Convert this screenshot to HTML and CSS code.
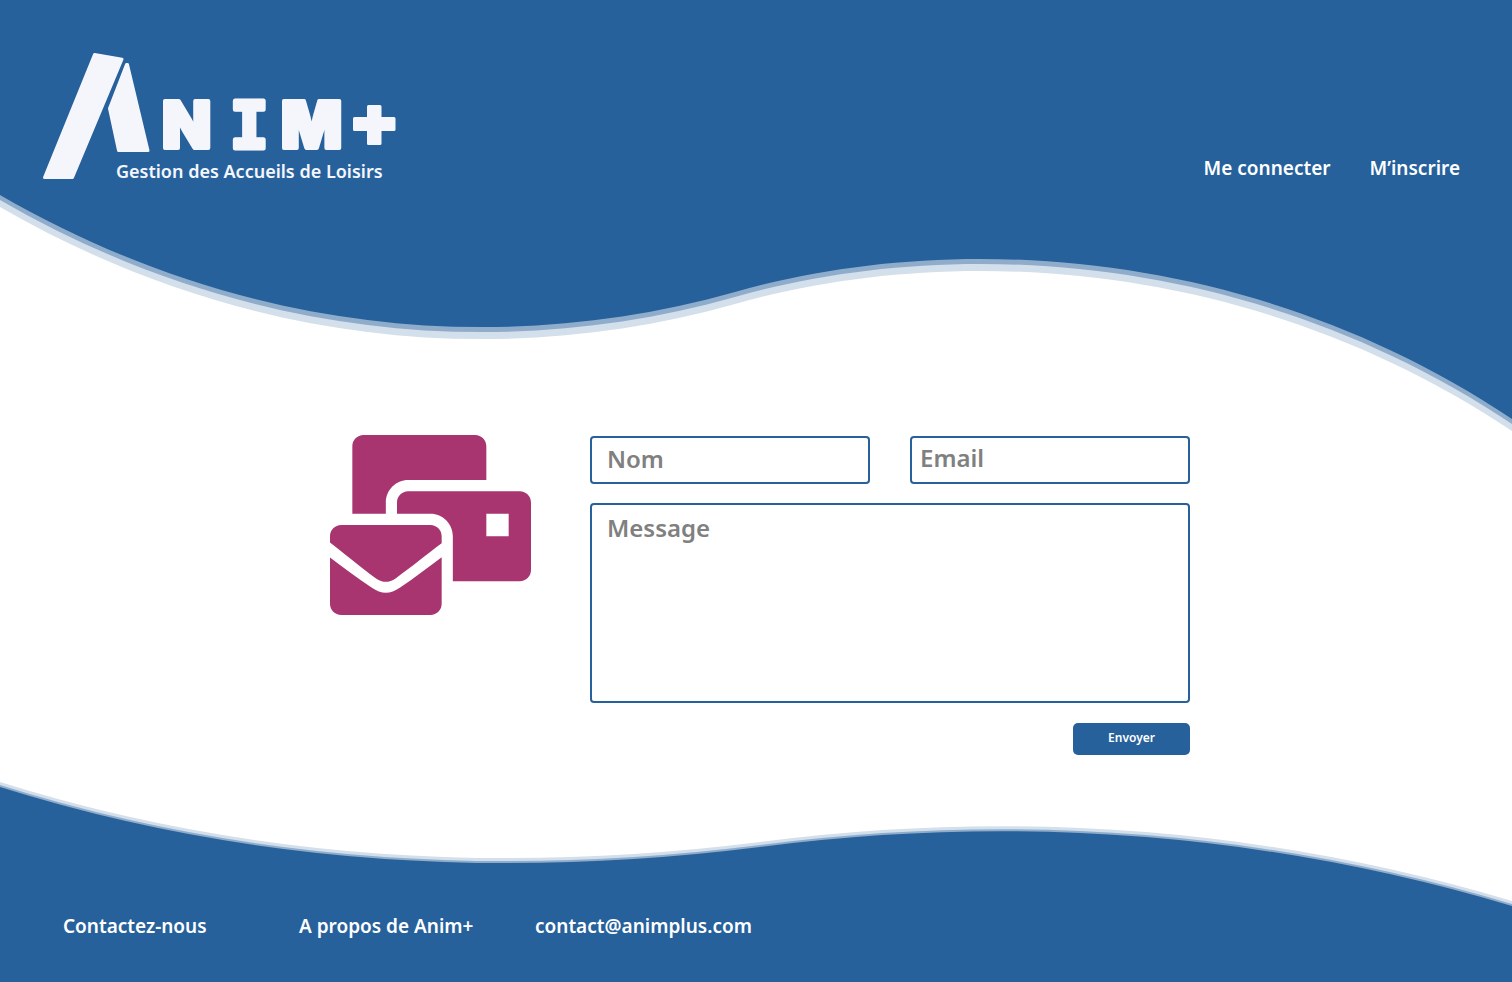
FILE: index.html
```html
<!DOCTYPE html>
<html lang="fr">
<head>
<meta charset="utf-8">
<meta name="viewport" content="width=device-width, initial-scale=1">
<title>Anim+ – Contact</title>
<link rel="stylesheet" href="styles.css">
</head>
<body>
<header class="header">
  <svg class="wave" viewBox="0 0 1512 435" preserveAspectRatio="none" aria-hidden="true">
    <path class="wave-pale" d="M0 0V207C230 340 490 373 735 304C960 240 1260 262 1512 431V0z"/>
    <path class="wave-soft" d="M0 0V200C230 333 490 366 735 297C960 233 1260 255 1512 424V0z"/>
    <path class="wave-deep" d="M0 0V195C230 328 490 361 735 292C960 228 1260 250 1512 419V0z"/>
  </svg>
  <a class="logo" href="#">
    <svg class="logo-art" viewBox="0 0 360 132" role="img" aria-label="Anim+ Gestion des Accueils de Loisirs">
      <g class="logo-mark">
        <path d="M54.500 4.500L82 9.200L32.500 127.500L4.500 127.500z"/>
        <path d="M86.500 14.500L87.500 14.500L108 100.500L78.500 100.500L69.500 58.500z"/>
        <path d="M328.500 56.500h11.500v12h14v11h-14v14h-11.500v-14h-14v-11h14z"/>
      </g>
      <text class="logo-word" y="98"><tspan x="122">N</tspan><tspan class="logo-slab" x="190">I</tspan><tspan x="241">M</tspan></text>
      <text class="logo-tagline" x="76" y="128">Gestion des Accueils de Loisirs</text>
    </svg>
  </a>
  <nav class="nav">
    <a href="#">Me connecter</a>
    <a href="#">M’inscrire</a>
  </nav>
</header>
<main class="contact">
  <svg class="contact-icon" viewBox="0 0 576 512" preserveAspectRatio="none" aria-hidden="true">
    <path d="M96 0h320c17.700 0 32 14.300 32 32v96H224c-35.300 0-64 28.700-64 64v32H64V32C64 14.300 78.300 0 96 0z"/>
    <path fill-rule="evenodd" d="M224 160h320c17.700 0 32 14.300 32 32v192c0 17.700-14.300 32-32 32H352V288c0-35.300-28.700-64-64-64h-96v-32c0-17.700 14.300-32 32-32zM448 224v64h64v-64z"/>
    <path d="M32 256h256c17.700 0 32 14.300 32 32v20C282 336 235 374 188 408c-19 13-37 13-56 0C85 374 38 334 0 305.500V288c0-17.700 14.300-32 32-32z"/>
    <path d="M0 348.500C38 377 76 406 119 434c29 20 53 20 82 0c43-28 81-58 119-86V480c0 17.700-14.300 32-32 32H32c-17.700 0-32-14.300-32-32z"/>
  </svg>
  <form class="form">
    <div class="row">
      <input class="field field-name" type="text" placeholder="Nom" aria-label="Nom">
      <input class="field field-email" type="email" placeholder="Email" aria-label="Email">
    </div>
    <textarea class="field field-message" placeholder="Message" aria-label="Message"></textarea>
    <button class="submit" type="submit">Envoyer</button>
  </form>
</main>
<footer class="footer">
  <svg class="wave" viewBox="0 0 1512 202" preserveAspectRatio="none" aria-hidden="true">
    <path class="wave-pale" d="M0 202V2Q353 113 760 62Q1147 12 1512 121V202z"/>
    <path class="wave-soft" d="M0 202V5Q353 116 760 65Q1147 15 1512 124V202z"/>
    <path class="wave-deep" d="M0 202V7Q353 118 760 67Q1147 17 1512 126V202z"/>
  </svg>
  <nav class="footer-nav">
    <a href="#">Contactez-nous</a>
    <a href="#">A propos de Anim+</a>
    <a href="mailto:contact@animplus.com">contact@animplus.com</a>
  </nav>
</footer>
</body>
</html>
```
FILE: styles.css
```css
* { box-sizing: border-box; }

body {
  display: flex;
  flex-direction: column;
  min-height: 100vh;
  margin: 0;
  background: #fff;
  color: #fff;
  font: 600 19px/28px "Noto Sans", "Open Sans", sans-serif;
}

a { color: inherit; text-decoration: none; }

.wave {
  position: absolute;
  inset: 0;
  z-index: -1;
  width: 100%;
  height: 100%;
}
.wave-pale { fill: #d4dfec; }
.wave-soft { fill: #8fadcb; }
.wave-deep { fill: #26619c; }

.header {
  position: relative;
  display: flex;
  justify-content: space-between;
  align-items: flex-start;
  height: 435px;
  padding: 50px 52px 0 40px;
}
.logo { display: block; }
.logo-art { display: block; width: 360px; height: 132px; }
.logo-mark {
  fill: #f5f6fc;
  stroke: #f5f6fc;
  stroke-width: 3px;
  stroke-linejoin: round;
}
.logo-word {
  fill: #f5f6fc;
  stroke: #f5f6fc;
  stroke-width: 4px;
  stroke-linejoin: round;
  font: 900 64px Inter, sans-serif;
}
.logo-slab { font: 700 64px "DejaVu Sans Mono", monospace; stroke-width: 5px; }
.logo-tagline { fill: #f5f6fc; font-size: 18px; }

.nav {
  display: flex;
  gap: 39px;
  padding-top: 104px;
}

.contact {
  display: flex;
  flex: 1;
  justify-content: center;
  align-items: flex-start;
  gap: 59px;
  padding-left: 8px;
}
.contact-icon { width: 201px; height: 180px; fill: #a83570; }

.form {
  display: flex;
  flex-direction: column;
  width: 600px;
  padding-top: 1px;
}
.row {
  display: grid;
  grid-template-columns: 1fr 1fr;
  gap: 40px;
  margin-bottom: 19px;
}
.field {
  width: 100%;
  border: 2px solid #26619c;
  border-radius: 4px;
  background: #fff;
  color: #333;
  font: 600 24px/32px "Noto Sans", "Open Sans", sans-serif;
}
.field::placeholder { color: #808080; opacity: 1; }
.field-name, .field-email { height: 48px; }
.field-name { padding: 0 15px 4px; }
.field-email { padding: 0 8px 5px; }
.field-message {
  display: block;
  height: 200px;
  padding: 7px 15px;
  resize: none;
}
.submit {
  align-self: flex-end;
  width: 117px;
  height: 32px;
  margin-top: 20px;
  padding: 0 0 2px;
  border: 0;
  border-radius: 5px;
  background: #26619c;
  color: #fff;
  font: 600 12px/16px "Noto Sans", "Open Sans", sans-serif;
}

.footer {
  position: relative;
  height: 202px;
  padding: 132px 63px 0;
}
.footer-nav { display: grid; grid-template-columns: 236px 236px auto; }
```
